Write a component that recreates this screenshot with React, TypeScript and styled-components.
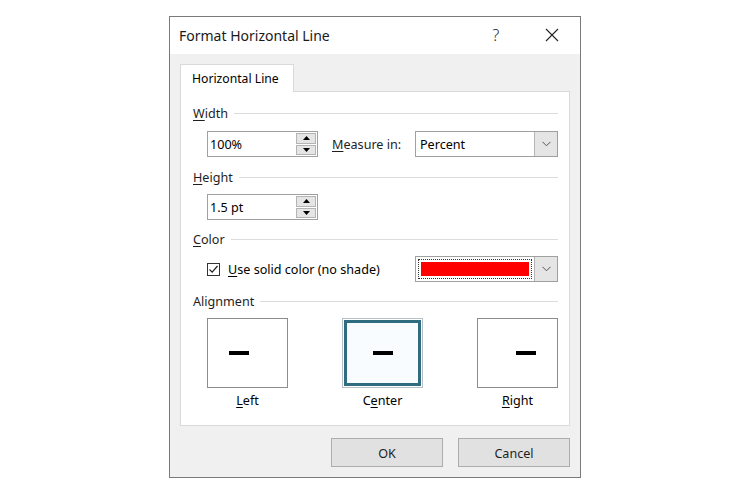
import React from 'react';
import styled, { createGlobalStyle } from 'styled-components';

const GlobalStyle = createGlobalStyle`
  html, body {
    margin: 0;
    padding: 0;
    background: #ffffff;
  }
  body {
    font-family: 'Noto Sans', 'Open Sans', 'Liberation Sans', sans-serif;
    font-size: 12.6px;
    color: #000000;
  }
`;

const Page = styled.div`
  /* Display */
  width: 750px;
  height: 497px;
  padding: 16px 0 0 169px;
  box-sizing: border-box;
`;

const Dialog = styled.div`
  /* Display */
  width: 412px;
  height: 462px;
  display: flex;
  flex-direction: column;
  box-sizing: border-box;
  background: #f0f0f0;
  border: 1px solid #7a7a7a;
`;

const TitleBar = styled.div`
  /* Display */
  height: 37px;
  display: flex;
  align-items: center;
  padding-left: 9px;
  padding-bottom: 1px;
  box-sizing: border-box;
  background: #ffffff;
  font-size: 14px;
  color: #1a1a1a;
`;

const Title = styled.span`
  flex: 1;
`;

const TitleButton = styled.span`
  /* Display */
  width: 56px;
  display: flex;
  align-items: center;
  justify-content: center;
  font-size: 16px;
  font-weight: 300;
  color: #222;
`;

const Body = styled.div`
  /* Display */
  flex: 1;
  display: flex;
  flex-direction: column;
  padding: 10px 10px 0 10px;
`;

const TabStrip = styled.div`
  display: flex;
  height: 27px;
`;

const Tab = styled.div`
  /* Display */
  width: 114px;
  display: flex;
  align-items: center;
  padding-left: 11px;
  box-sizing: border-box;
  background: #ffffff;
  border: 1px solid #d9d9d9;
  border-bottom: none;
  font-size: 12.2px;
  position: relative;
  z-index: 1;
  margin-bottom: -1px;
`;

const Panel = styled.div`
  /* Display */
  height: 335px;
  box-sizing: border-box;
  background: #ffffff;
  border: 1px solid #d9d9d9;
  padding: 11px 11px 0 12px;
  display: flex;
  flex-direction: column;
`;

const SectionHead = styled.div<{ $top: number }>`
  /* Display */
  height: 20px;
  display: flex;
  align-items: center;
  gap: 6px;
  margin-top: ${(p) => p.$top}px;
  color: #1e1e1e;

  &::after {
    content: '';
    flex: 1;
    height: 1px;
    background: #dcdcdc;
  }
`;

const Row = styled.div<{ $top: number }>`
  /* Display */
  display: flex;
  align-items: center;
  height: 26px;
  margin-top: ${(p) => p.$top}px;
  padding-left: 14px;
  white-space: nowrap;
`;

const Spinner = styled.div`
  /* Display */
  width: 111px;
  height: 26px;
  flex-shrink: 0;
  display: flex;
  box-sizing: border-box;
  border: 1px solid #a0a0a0;
  background: #ffffff;
`;

const SpinnerText = styled.div`
  flex: 1;
  display: flex;
  align-items: center;
  padding-left: 2px;
`;

const SpinButtons = styled.div`
  /* Display */
  width: 20px;
  display: flex;
  flex-direction: column;
  padding: 1px 1px 1px 0;
  gap: 1px;
`;

const SpinButton = styled.div`
  flex: 1;
  display: flex;
  align-items: center;
  justify-content: center;
  background: #e5e5e5;
  border: 1px solid #b4b4b4;
`;

const Label = styled.span`
  margin-left: 14px;
  white-space: nowrap;
  color: #1e1e1e;
`;

const Select = styled.div`
  /* Display */
  width: 143px;
  height: 26px;
  flex-shrink: 0;
  display: flex;
  box-sizing: border-box;
  border: 1px solid #a0a0a0;
  background: #ffffff;
  margin-left: auto;
`;

const SelectValue = styled.div`
  flex: 1;
  display: flex;
  align-items: center;
  padding-left: 4px;
`;

const ColorValue = styled.div`
  flex: 1;
  padding: 2px;
  display: flex;
`;

const ColorFocus = styled.div`
  flex: 1;
  border: 1px dotted #333;
  padding: 2px;
  display: flex;
`;

const ColorSwatch = styled.div<{ $color: string }>`
  flex: 1;
  background: ${(p) => p.$color};
`;

const DropButton = styled.div`
  /* Display */
  width: 22px;
  display: flex;
  align-items: center;
  justify-content: center;
  background: #e5e5e5;
  border-left: 1px solid #b4b4b4;
`;

const Checkbox = styled.div`
  /* Display */
  width: 13px;
  height: 13px;
  flex-shrink: 0;
  box-sizing: border-box;
  border: 1px solid #333;
  background: #fff;
  display: flex;
  align-items: center;
  justify-content: center;
  margin-right: 8px;
`;

const Mnemonic = styled.span`
  text-decoration: underline;
  text-underline-offset: 2px;
`;

const AlignGrid = styled.div`
  /* Display */
  display: flex;
  justify-content: space-between;
  padding-left: 14px;
  margin-top: 7px;
`;

const AlignOption = styled.div`
  display: flex;
  flex-direction: column;
  align-items: center;
  gap: 4px;
  width: 81px;
`;

const AlignBox = styled.div<{ $align: 'flex-start' | 'center' | 'flex-end'; $selected?: boolean }>`
  /* Display */
  width: ${(p) => (p.$selected ? 77 : 81)}px;
  height: ${(p) => (p.$selected ? 66 : 70)}px;
  margin: ${(p) => (p.$selected ? 2 : 0)}px;
  box-sizing: border-box;
  display: flex;
  align-items: center;
  justify-content: ${(p) => p.$align};
  padding: 0 ${(p) => (p.$selected ? 16 : 21)}px;
  background: ${(p) => (p.$selected ? '#f8fcfe' : '#ffffff')};
  border: ${(p) => (p.$selected ? '3px solid #2f6c80' : '1px solid #8c8c8c')};
  box-shadow: ${(p) => (p.$selected ? '0 0 0 1px #ffffff, 0 0 0 2px #b4c0c4' : 'none')};
`;

const Dash = styled.div`
  width: 20px;
  height: 4px;
  background: #000;
`;

const Footer = styled.div`
  /* Display */
  display: flex;
  justify-content: flex-end;
  gap: 15px;
  margin-top: 12px;
`;

const Button = styled.div`
  /* Display */
  width: 112px;
  height: 29px;
  box-sizing: border-box;
  display: flex;
  align-items: center;
  justify-content: center;
  padding-top: 1px;
  background: #e1e1e1;
  border: 1px solid #adadad;
  color: #1e1e1e;
`;

function Triangle({ up }: { up?: boolean }) {
  return (
    <svg width="7" height="4" viewBox="0 0 7 4">
      <path d={up ? 'M0 4 L3.5 0 L7 4 Z' : 'M0 0 L3.5 4 L7 0 Z'} fill="#000" />
    </svg>
  );
}

function Chevron() {
  return (
    <svg width="9" height="6" viewBox="0 0 9 6">
      <path d="M0.5 0.8 L4.5 4.8 L8.5 0.8" fill="none" stroke="#555" strokeWidth="1" />
    </svg>
  );
}

function SpinBox({ value }: { value: string }) {
  return (
    <Spinner>
      <SpinnerText>{value}</SpinnerText>
      <SpinButtons>
        <SpinButton>
          <Triangle up />
        </SpinButton>
        <SpinButton>
          <Triangle />
        </SpinButton>
      </SpinButtons>
    </Spinner>
  );
}

export default function App() {
  return (
    <Page>
      <GlobalStyle />
      <Dialog>
        <TitleBar>
          <Title>Format Horizontal Line</Title>
          <TitleButton>?</TitleButton>
          <TitleButton>
            <svg width="14" height="14" viewBox="0 0 14 14">
              <path d="M1 1 L13 13 M13 1 L1 13" stroke="#222" strokeWidth="1.1" />
            </svg>
          </TitleButton>
        </TitleBar>
        <Body>
          <TabStrip>
            <Tab>Horizontal Line</Tab>
          </TabStrip>
          <Panel>
            <SectionHead $top={0}>
              <span>
                <Mnemonic>W</Mnemonic>idth
              </span>
            </SectionHead>
            <Row $top={8}>
              <SpinBox value="100%" />
              <Label>
                <Mnemonic>M</Mnemonic>easure in:
              </Label>
              <Select>
                <SelectValue>Percent</SelectValue>
                <DropButton>
                  <Chevron />
                </DropButton>
              </Select>
            </Row>

            <SectionHead $top={10}>
              <span>
                <Mnemonic>H</Mnemonic>eight
              </span>
            </SectionHead>
            <Row $top={7}>
              <SpinBox value="1.5 pt" />
            </Row>

            <SectionHead $top={9}>
              <span>
                <Mnemonic>C</Mnemonic>olor
              </span>
            </SectionHead>
            <Row $top={7}>
              <Checkbox>
                <svg width="11" height="11" viewBox="0 0 11 11">
                  <path d="M1.5 5.5 L4.2 8.2 L9.5 2" fill="none" stroke="#222" strokeWidth="1.2" />
                </svg>
              </Checkbox>
              <span>
                <Mnemonic>U</Mnemonic>se solid color (no shade)
              </span>
              <Select>
                <ColorValue>
                  <ColorFocus>
                    <ColorSwatch $color="#ff0000" />
                  </ColorFocus>
                </ColorValue>
                <DropButton>
                  <Chevron />
                </DropButton>
              </Select>
            </Row>

            <SectionHead $top={9}>
              <span>Alignment</span>
            </SectionHead>
            <AlignGrid>
              <AlignOption>
                <AlignBox $align="flex-start">
                  <Dash />
                </AlignBox>
                <span>
                  <Mnemonic>L</Mnemonic>eft
                </span>
              </AlignOption>
              <AlignOption>
                <AlignBox $align="center" $selected>
                  <Dash />
                </AlignBox>
                <span>
                  C<Mnemonic>e</Mnemonic>nter
                </span>
              </AlignOption>
              <AlignOption>
                <AlignBox $align="flex-end">
                  <Dash />
                </AlignBox>
                <span>
                  <Mnemonic>R</Mnemonic>ight
                </span>
              </AlignOption>
            </AlignGrid>
          </Panel>
          <Footer>
            <Button>OK</Button>
            <Button>Cancel</Button>
          </Footer>
        </Body>
      </Dialog>
    </Page>
  );
}
